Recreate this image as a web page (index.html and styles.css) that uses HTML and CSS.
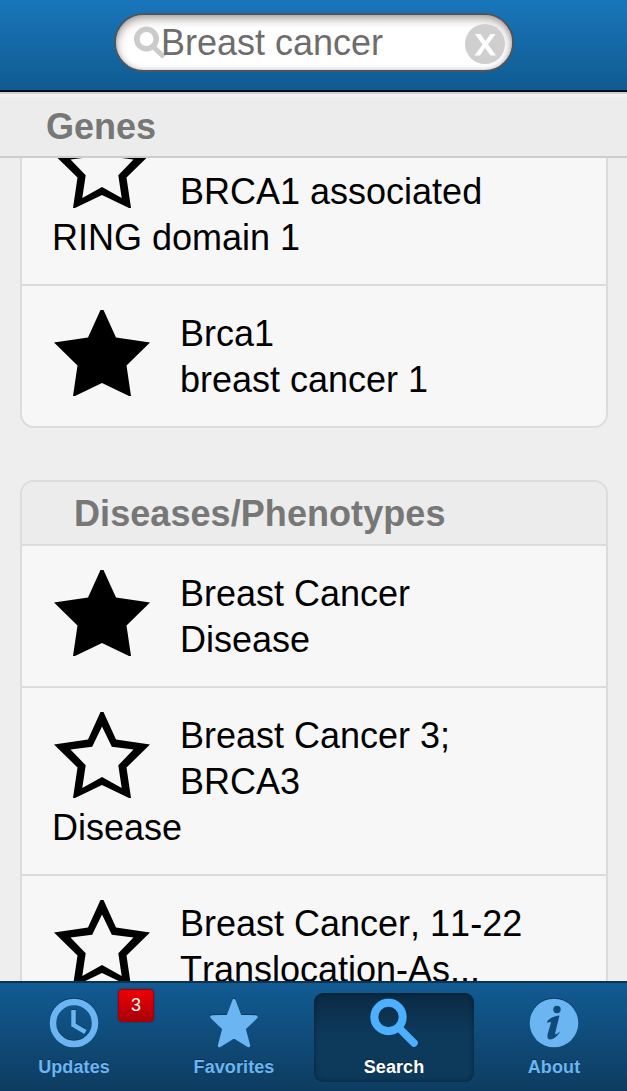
FILE: index.html
```html
<!DOCTYPE html>
<html lang="en">
<head>
<meta charset="utf-8">
<title>Search</title>
<link rel="stylesheet" href="styles.css">
</head>
<body>
<svg class="defs" aria-hidden="true">
  <symbol id="star-full" viewBox="0 0 96 86"><path d="M46.500 0h3L62 27.500 96 32.500 72.500 55.500 77 86H75L48 73 21 86H19L23.500 55.500 0 32.500 34 27.500Z"/></symbol>
  <symbol id="star-open" viewBox="0 0 96 86"><path fill-rule="evenodd" d="M46.500 0h3L62 27.500 96 32.500 72.500 55.500 77 86H75L48 73 21 86H19L23.500 55.500 0 32.500 34 27.500ZM48 14.500 38.200 34.800 16.500 37.500 31.700 53.300 28.300 76 48 65 67.700 76 64.300 53.300 79.500 37.500 57.800 34.800Z"/></symbol>
</svg>
<div class="app">
  <header class="topbar">
    <div class="search">
      <svg class="lens" viewBox="0 0 32 33"><circle cx="12.500" cy="13" r="9.700" fill="none" stroke="#cbcbcb" stroke-width="5.600"/><path d="M19 20.500l11 10.500" stroke="#cbcbcb" stroke-width="5"/></svg>
      <span class="query">Breast cancer</span>
      <svg class="clear" viewBox="0 0 40 40"><circle cx="20" cy="20" r="20" fill="#cfcfcf"/><path d="M10 10h5.500l5 7 5-7h5l-7.500 10.500 8 11h-5.500l-5.500-7.800L15 31.500h-5.500l8-11z" fill="#fff"/></svg>
    </div>
  </header>
  <h2 class="sticky">Genes</h2>
  <main class="results">
    <ul class="card first">
      <li><svg class="star"><use href="#star-open"/></svg>Bard1<br>BRCA1 associated<br>RING domain 1</li>
      <li><svg class="star"><use href="#star-full"/></svg>Brca1<br>breast cancer 1</li>
    </ul>
    <section class="card">
      <h2 class="cardhead">Diseases/Phenotypes</h2>
      <ul>
        <li><svg class="star"><use href="#star-full"/></svg>Breast Cancer<br>Disease</li>
        <li><svg class="star"><use href="#star-open"/></svg>Breast Cancer 3;<br>BRCA3<br>Disease</li>
        <li class="unkerned"><svg class="star"><use href="#star-open"/></svg>Breast Cancer, 11-22<br>Translocation-As...</li>
      </ul>
    </section>
  </main>
  <nav class="tabs">
    <a class="tab"><svg class="icon" viewBox="0 0 50 50"><circle cx="25" cy="25" r="21" fill="none" stroke="#6ab5f2" stroke-width="6.500"/><path d="M24.500 12v15l12 7" fill="none" stroke="#6ab5f2" stroke-width="4.500"/></svg><span>Updates</span><b class="badge">3</b></a>
    <a class="tab"><svg class="icon" viewBox="0 0 50 50"><path d="M25 2.500 31 18.500 47 19 35 30.500 39.500 47.500 25 38.500 10.500 47.500 15 30.500 3 19 19 18.500Z" fill="#6ab5f2" stroke="#6ab5f2" stroke-width="3.400" stroke-linejoin="round"/></svg><span>Favorites</span></a>
    <a class="tab active"><svg class="icon" viewBox="0 0 50 50"><circle cx="19.500" cy="19" r="14.200" fill="none" stroke="#4db0ff" stroke-width="8"/><path d="M31 31l14 14" stroke="#4db0ff" stroke-width="7.500" stroke-linecap="round"/></svg><span>Search</span></a>
    <a class="tab"><svg class="icon" viewBox="0 0 50 50"><circle cx="25" cy="25" r="24.300" fill="#6ab5f2"/><g fill="#0f4a78"><circle cx="28" cy="11.500" r="3.700"/><path d="M18 23.500C21 20 25 18 30.500 17.500L26.200 35C25.800 37.200 28 36 31 33.500C29 38 24 41.500 21 41.500C18.500 41.500 18 39 18.700 36L22 24.500C21.500 23.500 20 24 18.500 25Z"/></g></svg><span>About</span></a>
  </nav>
</div>
</body>
</html>
```
FILE: styles.css
```css
* { box-sizing: border-box; }
body {
  margin: 0;
  font-family: "Liberation Sans", Arial, sans-serif;
  font-size: 36px;
  line-height: 46px;
  color: #000;
}
.defs { position: absolute; width: 0; height: 0; }
.app {
  display: flex;
  flex-direction: column;
  height: 1091px;
  overflow: hidden;
  background: #eee;
}
.topbar {
  flex: none;
  height: 92px;
  padding: 13px 0 0 114px;
  background: linear-gradient(#1976bb, #105b91);
  border-bottom: 2px solid #000818;
}
.search {
  display: flex;
  align-items: center;
  width: 400px;
  height: 59px;
  padding: 0 9px 0 18px;
  border: 2px solid #4b565f;
  border-radius: 30px;
  background: #fff;
  box-shadow: inset 0 4px 10px rgba(70, 50, 45, .45), inset 0 0 4px rgba(0, 0, 0, .15);
}
.lens { flex: none; width: 32px; height: 33px; }
.query { flex: 1; margin-left: -5px; padding-top: 1px; color: #6d6d6d; }
.clear { flex: none; width: 40px; height: 40px; margin: 2px -2px 0 0; }
h2 { margin: 0; font-size: 36px; font-weight: bold; color: #777; }
.sticky {
  flex: none;
  height: 66px;
  padding: 12px 0 0 46px;
  background: #ececec;
  border-bottom: 2px solid #cdcdcd;
  box-shadow: inset 0 2px #cfd0d3, inset 0 5px #f5f1ee;
}
.results { flex: 1; min-height: 0; overflow: hidden; padding: 0 19px 0 20px; }
ul { margin: 0; padding: 0; list-style: none; }
.card {
  overflow: hidden;
  border: 2px solid #dcdcdc;
  border-radius: 14px;
  background: #f7f7f7;
}
.first { margin: -62px 0 52px; }
.cardhead {
  height: 64px;
  padding: 9px 0 0 52px;
  letter-spacing: .07px;
  background: #ececec;
  border-bottom: 2px solid #dcdcdc;
}
li { padding: 25px 29px 23px 30px; white-space: nowrap; }
li + li { border-top: 2px solid #dcdcdc; }
.unkerned { font-kerning: none; }
.star { float: left; width: 96px; height: 86px; margin: -1px 30px 0 2px; }
.tabs {
  flex: none;
  display: flex;
  width: 640px;
  height: 110px;
  margin-left: -6px;
  padding: 10px 0 9px;
  background: linear-gradient(#115b93, #0e3c60);
  border-top: 2px solid #0b3454;
}
.tab {
  position: relative;
  flex: none;
  display: flex;
  flex-direction: column;
  align-items: center;
  width: 160px;
  height: 89px;
  padding-top: 5px;
  border-radius: 9px;
  font-size: 18px;
  font-weight: bold;
  line-height: 22px;
  letter-spacing: .1px;
  color: #6ab5f2;
}
.icon { width: 50px; height: 50px; margin-bottom: 8px; filter: drop-shadow(0 -1px 0 #0b3b63); }
.tab span { text-shadow: 0 -1px rgba(0, 0, 0, .35); }
.active {
  color: #fff;
  background: linear-gradient(#0a2a43, #0d395b 45%, #0d395b);
  box-shadow: inset 0 0 5px rgba(0, 0, 0, .4);
}
.badge {
  position: absolute;
  left: 124px;
  top: -4px;
  width: 36px;
  height: 33px;
  border: 1px solid #a00008;
  border-radius: 4px;
  background: linear-gradient(#ed0005, #a80005);
  box-shadow: 0 0 2px rgba(60, 0, 20, .6);
  color: #fff;
  font-size: 18px;
  font-weight: normal;
  line-height: 31px;
  text-align: center;
}
```
